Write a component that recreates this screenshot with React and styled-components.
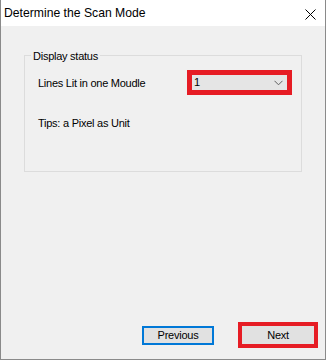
import React from "react";
import styled, { createGlobalStyle } from "styled-components";

const Global = createGlobalStyle`
  html, body { margin: 0; padding: 0; background: #f0f0f0; }
  body { font-family: "Liberation Sans", Arial, sans-serif; font-size: 11px; letter-spacing: -0.25px; color: #000; }
`;

const Window = styled.div`
  width: 326px;
  height: 360px;
  box-sizing: border-box;
  border-left: 1px solid #8a8a8a;
  border-right: 1px solid #8a8a8a;
  border-bottom: 1px solid #8a8a8a;
  display: flex;
  flex-direction: column;
  background: #f0f0f0;
`;

const TitleBar = styled.div`
  height: 26px;
  flex: none;
  background: #fff;
  display: flex;
  align-items: center;
  padding-left: 3px;
  padding-right: 9px;
`;

const Title = styled.div`
  flex: 1;
  font-size: 12.2px;
  letter-spacing: 0;
  line-height: 16px;
`;

const CloseBtn = styled.svg`
  width: 11px;
  height: 11px;
  display: block;
  margin-top: 2px;
`;

const Body = styled.div`
  flex: 1;
  display: flex;
  flex-direction: column;
  padding: 29px 23px 11px 23px;
`;

const GroupBox = styled.div`
  position: relative;
  border: 1px solid #dcdcdc;
  padding: 14px 9px 40px 13px;
  display: flex;
  flex-direction: column;
`;

const Legend = styled.div`
  position: absolute;
  top: -8px;
  left: 6px;
  padding: 0 2px;
  background: #f0f0f0;
  line-height: 16px;
`;

const Row = styled.div`
  display: flex;
  align-items: center;
  margin-top: ${(p) => p.$gap || 0}px;
  line-height: 16px;
`;

const Label = styled.span`
  flex: 1;
`;

const Combo = styled.div`
  width: 105px;
  height: 25px;
  box-sizing: border-box;
  border: 5px solid #e61c24;
  background: #e5e5e5;
  display: flex;
  align-items: center;
  padding-left: 2px;
  padding-right: 4px;
`;

const ComboText = styled.span`
  flex: 1;
  line-height: 15px;
`;

const Footer = styled.div`
  margin-top: auto;
  display: flex;
  justify-content: flex-end;
  align-items: center;
  gap: 24px;
  margin-right: -16px;
`;

const Button = styled.div`
  box-sizing: border-box;
  width: ${(p) => p.$w}px;
  height: ${(p) => p.$h}px;
  border: ${(p) => p.$bw}px solid ${(p) => p.$bc};
  background: #e1e1e1;
  display: flex;
  align-items: center;
  justify-content: center;
  line-height: 15px;
`;

export default function App() {
  return (
    <>
      <Global />
      <Window>
        <TitleBar>
          <Title>Determine the Scan Mode</Title>
          <CloseBtn viewBox="0 0 11 11">
            <path d="M0.5 0.5 L10.5 10.5 M10.5 0.5 L0.5 10.5" stroke="#000" strokeWidth="1" fill="none" />
          </CloseBtn>
        </TitleBar>
        <Body>
          <GroupBox>
            <Legend>Display status</Legend>
            <Row>
              <Label>Lines Lit in one Moudle</Label>
              <Combo>
                <ComboText>1</ComboText>
                <svg width="9" height="6" viewBox="0 0 9 6">
                  <path d="M0.5 0.8 L4.5 4.8 L8.5 0.8" stroke="#606060" strokeWidth="1" fill="none" />
                </svg>
              </Combo>
            </Row>
            <Row $gap={20}>
              <Label>Tips: a Pixel as Unit</Label>
            </Row>
          </GroupBox>
          <Footer>
            <Button $w={72} $h={19} $bw={2} $bc="#0078d7">Previous</Button>
            <Button $w={80} $h={26} $bw={4} $bc="#e61c24">Next</Button>
          </Footer>
        </Body>
      </Window>
    </>
  );
}
